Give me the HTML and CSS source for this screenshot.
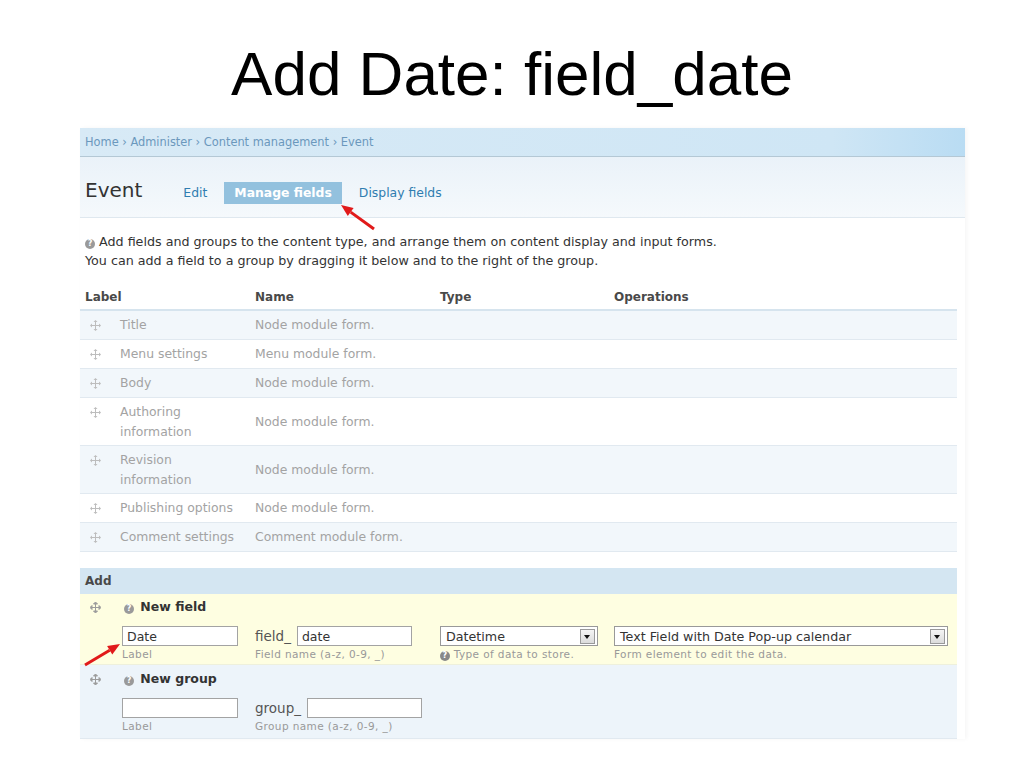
FILE: index.html
```html
<!DOCTYPE html>
<html lang="en">
<head>
	<meta charset="UTF-8">
	<title>Add Date: field_date</title>
	<link rel="stylesheet" href="styles.css">
</head>
<body>
	<div class="slide">
		<h1 class="slide-title">Add Date: field_date</h1>

		<div class="panel">
			<div class="breadcrumb">Home › Administer › Content management › Event</div>
			<div class="page-head">
				<h2 class="page-title">Event</h2>
				<ul class="tabs">
					<li><a href="#">Edit</a></li>
					<li class="active"><a href="#">Manage fields</a></li>
					<li><a href="#">Display fields</a></li>
				</ul>
			</div>

			<div class="content">
				<p class="help"><span class="qmark">?</span> Add fields and groups to the content type, and arrange them on content display and input forms.<br>You can add a field to a group by dragging it below and to the right of the group.</p>

				<div class="fields">
					<div class="row head">
						<div class="cell">Label</div>
						<div class="cell">Name</div>
						<div class="cell">Type</div>
						<div class="cell">Operations</div>
					</div>
					<div class="row odd">
						<div class="cell lbl"><span class="drag"><svg viewBox="0 0 11 11"><path d="M5.5 1.5v8M1.5 5.5h8"/><path class="tip" d="M5.5 0l2 2h-4zM5.5 11l2-2h-4zM0 5.5l2 2v-4zM11 5.5l-2 2v-4z"/></svg></span><span>Title</span></div>
						<div class="cell">Node module form.</div>
						<div class="cell"></div>
						<div class="cell"></div>
					</div>
					<div class="row">
						<div class="cell lbl"><span class="drag"><svg viewBox="0 0 11 11"><path d="M5.5 1.5v8M1.5 5.5h8"/><path class="tip" d="M5.5 0l2 2h-4zM5.5 11l2-2h-4zM0 5.5l2 2v-4zM11 5.5l-2 2v-4z"/></svg></span><span>Menu settings</span></div>
						<div class="cell">Menu module form.</div>
						<div class="cell"></div>
						<div class="cell"></div>
					</div>
					<div class="row odd">
						<div class="cell lbl"><span class="drag"><svg viewBox="0 0 11 11"><path d="M5.5 1.5v8M1.5 5.5h8"/><path class="tip" d="M5.5 0l2 2h-4zM5.5 11l2-2h-4zM0 5.5l2 2v-4zM11 5.5l-2 2v-4z"/></svg></span><span>Body</span></div>
						<div class="cell">Node module form.</div>
						<div class="cell"></div>
						<div class="cell"></div>
					</div>
					<div class="row">
						<div class="cell lbl two"><span class="drag"><svg viewBox="0 0 11 11"><path d="M5.5 1.5v8M1.5 5.5h8"/><path class="tip" d="M5.5 0l2 2h-4zM5.5 11l2-2h-4zM0 5.5l2 2v-4zM11 5.5l-2 2v-4z"/></svg></span><span>Authoring<br>information</span></div>
						<div class="cell">Node module form.</div>
						<div class="cell"></div>
						<div class="cell"></div>
					</div>
					<div class="row odd">
						<div class="cell lbl two"><span class="drag"><svg viewBox="0 0 11 11"><path d="M5.5 1.5v8M1.5 5.5h8"/><path class="tip" d="M5.5 0l2 2h-4zM5.5 11l2-2h-4zM0 5.5l2 2v-4zM11 5.5l-2 2v-4z"/></svg></span><span>Revision<br>information</span></div>
						<div class="cell">Node module form.</div>
						<div class="cell"></div>
						<div class="cell"></div>
					</div>
					<div class="row">
						<div class="cell lbl"><span class="drag"><svg viewBox="0 0 11 11"><path d="M5.5 1.5v8M1.5 5.5h8"/><path class="tip" d="M5.5 0l2 2h-4zM5.5 11l2-2h-4zM0 5.5l2 2v-4zM11 5.5l-2 2v-4z"/></svg></span><span>Publishing options</span></div>
						<div class="cell">Node module form.</div>
						<div class="cell"></div>
						<div class="cell"></div>
					</div>
					<div class="row odd">
						<div class="cell lbl"><span class="drag"><svg viewBox="0 0 11 11"><path d="M5.5 1.5v8M1.5 5.5h8"/><path class="tip" d="M5.5 0l2 2h-4zM5.5 11l2-2h-4zM0 5.5l2 2v-4zM11 5.5l-2 2v-4z"/></svg></span><span>Comment settings</span></div>
						<div class="cell">Comment module form.</div>
						<div class="cell"></div>
						<div class="cell"></div>
					</div>
				</div>

				<div class="add">
					<div class="add-head">Add</div>

					<div class="add-row new-field">
						<span class="drag dark"><svg viewBox="0 0 11 11"><path d="M5.5 1.5v8M1.5 5.5h8"/><path class="tip" d="M5.5 0l2 2h-4zM5.5 11l2-2h-4zM0 5.5l2 2v-4zM11 5.5l-2 2v-4z"/></svg></span>
						<div class="add-body">
							<div class="add-title"><span class="qmark">?</span> New field</div>
							<div class="ctl">
								<input class="txt w-label" type="text" value="Date">
								<div class="desc">Label</div>
							</div>
							<div class="ctl">
								<div class="prefixed"><span class="prefix">field_</span><input class="txt w-name" type="text" value="date"></div>
								<div class="desc">Field name (a-z, 0-9, _)</div>
							</div>
							<div class="ctl">
								<div class="sel w-type"><span>Datetime</span><i class="sel-btn"></i></div>
								<div class="desc"><span class="qmark small">?</span> Type of data to store.</div>
							</div>
							<div class="ctl">
								<div class="sel w-widget"><span>Text Field with Date Pop-up calendar</span><i class="sel-btn"></i></div>
								<div class="desc">Form element to edit the data.</div>
							</div>
						</div>
					</div>

					<div class="add-row new-group">
						<span class="drag dark"><svg viewBox="0 0 11 11"><path d="M5.5 1.5v8M1.5 5.5h8"/><path class="tip" d="M5.5 0l2 2h-4zM5.5 11l2-2h-4zM0 5.5l2 2v-4zM11 5.5l-2 2v-4z"/></svg></span>
						<div class="add-body">
							<div class="add-title"><span class="qmark">?</span> New group</div>
							<div class="ctl">
								<input class="txt w-label" type="text" value="">
								<div class="desc">Label</div>
							</div>
							<div class="ctl">
								<div class="prefixed"><span class="prefix">group_</span><input class="txt w-name" type="text" value=""></div>
								<div class="desc">Group name (a-z, 0-9, _)</div>
							</div>
						</div>
					</div>
				</div>
			</div>
		</div>

		<!-- red pointers drawn over the screenshot -->
		<svg class="pointers" viewBox="0 0 1024 768">
			<path d="M374 229L350.7 212.1M85 665L109.7 650.2"/>
			<polygon points="341,205 353.6,208 347.8,216.1"/>
			<polygon points="120,644 112.3,654.5 107.1,645.9"/>
		</svg>
	</div>
</body>
</html>
```

FILE: styles.css
```css
html,body{margin:0;padding:0;background:#fff;}
ul,li,p,h1,h2{list-style:none;margin:0;padding:0;}
.slide{position:relative;width:1024px;height:768px;overflow:hidden;font-family:"DejaVu Sans",Verdana,sans-serif;color:#333;}

.slide-title{padding-top:39px;font-family:"Liberation Sans",Arial,sans-serif;font-weight:normal;font-size:62px;line-height:69px;text-align:center;color:#000;}

.panel{width:885px;margin:20px 0 0 80px;box-shadow:2px 0 4px rgba(0,0,0,.04);}

.breadcrumb{height:28px;line-height:28px;padding-left:5px;font-size:11.4px;color:#6b98bd;
	background:linear-gradient(to right,#d8eaf6 0%,#cfe6f5 85%,#b9dcf3 100%);
	border-bottom:1px solid #b4c8d5;}

.page-head{display:flex;align-items:baseline;padding:21px 5px 13px;border-bottom:1px solid #dfe8ef;
	background:linear-gradient(#eaf2f9,#f5f9fc);}
.page-title{font-size:20px;font-weight:normal;line-height:24px;color:#333;}
.tabs{display:flex;gap:7px;margin-left:31px;}
.tabs a{display:block;padding:3px 10px;line-height:16px;font-size:12.4px;color:#2f7db0;text-decoration:none;}
.tabs .active a{background:#93c1de;color:#fff;font-weight:bold;}

.content{padding:14px 8px 0 0;}
.help{padding-left:5px;font-size:12.7px;line-height:19px;color:#333;}
.qmark{display:inline-block;width:10px;height:10px;border-radius:50%;background:#9a9a9a;color:#fff;font-size:8px;line-height:10px;text-align:center;font-weight:bold;vertical-align:0;}
.qmark.small{background:#888;}

.fields{margin-top:14px;font-size:12.4px;}
.row{display:grid;grid-template-columns:175px 185px 174px 1fr;align-items:center;padding:4px 0;border-bottom:1px solid #e1e9f0;color:#a3a3a3;line-height:20px;}
.row.odd{background:#f2f7fb;}
.row.head{padding:3px 0 2px;border-bottom:2px solid #d6e4ee;color:#494949;font-weight:bold;font-size:12px;}
.row.head .cell:first-child{padding-left:5px;}
.lbl{display:flex;align-items:flex-start;align-self:start;}
.lbl.two{line-height:19.5px;}
.drag{flex:0 0 40px;display:flex;align-items:center;height:20px;padding-left:10px;box-sizing:border-box;}
.drag svg{width:11px;height:11px;}
.drag path{stroke:#bdbdbd;stroke-width:1;fill:none;}
.drag path.tip{fill:#bdbdbd;stroke:none;}
.drag.dark path{stroke:#9c9c9c;}
.drag.dark path.tip{fill:#9c9c9c;}

.add{margin-top:16px;font-size:12px;}
.add-head{padding:3px 5px;line-height:20px;background:#d4e6f2;font-weight:bold;color:#494949;}
.add-row{display:flex;align-items:flex-start;}
.add-row .drag{flex-basis:42px;}
.new-field{padding:3px 0 3px;background:#fefee1;border-bottom:1px solid #eef0dc;}
.new-group{padding:4px 0 5px;background:#edf4fa;border-bottom:1px solid #e1e9f0;}
.add-body{flex:1;display:grid;grid-template-columns:133px 185px 174px 1fr;row-gap:9px;}
.add-title{grid-column:1 / -1;line-height:20px;font-weight:bold;font-size:12.5px;color:#333;}
.add-title .qmark{margin-left:2px;margin-right:2px;}

.prefixed{display:flex;align-items:center;gap:6px;}
.prefix{font-size:13.5px;color:#555;line-height:20px;}
.txt{display:block;box-sizing:border-box;height:20px;margin:0;padding:0 4px;border:1px solid #a3a3a3;background:#fff;font:12.5px "DejaVu Sans",Verdana,sans-serif;color:#333;outline:none;}
.w-label{width:116px;}
.w-name{width:115px;}
.sel{display:flex;align-items:center;justify-content:space-between;box-sizing:border-box;height:20px;padding:0 2px 0 5px;border:1px solid #999;background:#fff;font-size:12.7px;color:#333;}
.w-type{width:158px;}
.w-widget{width:334px;}
.sel-btn{position:relative;width:13px;height:13px;border:1px solid #9a9a9a;background:linear-gradient(#f4f4f4,#dcdcdc);}
.sel-btn:after{content:"";position:absolute;left:3px;top:5px;border:3.5px solid transparent;border-top:4px solid #111;border-bottom:0;}
.desc{margin-top:1px;font-size:10.5px;line-height:14px;color:#999;letter-spacing:.4px;}

.pointers{position:absolute;left:0;top:0;width:1024px;height:768px;pointer-events:none;}
.pointers path{stroke:#e11a1a;stroke-width:3;fill:none;}
.pointers polygon{fill:#e11a1a;}
```
